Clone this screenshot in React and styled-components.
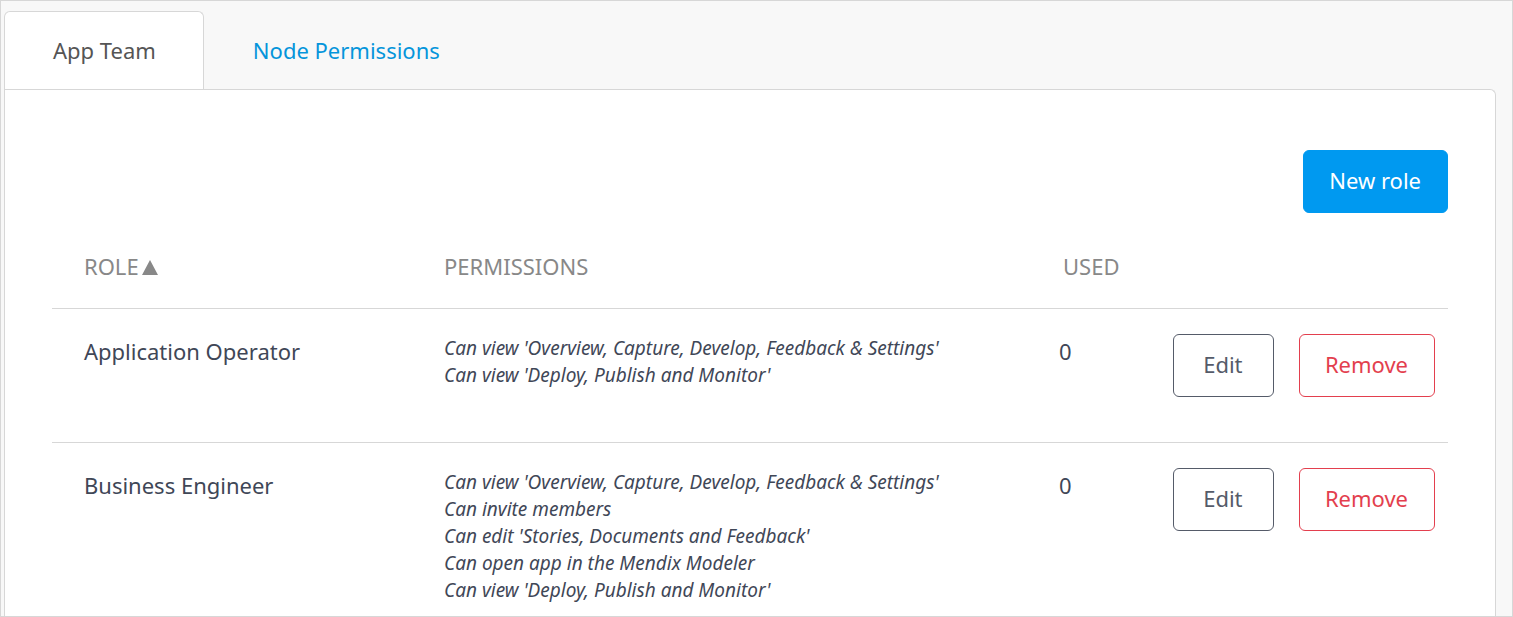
import React from 'react';
import styled, { createGlobalStyle } from 'styled-components';

const Global = createGlobalStyle`
  *, *::before, *::after { box-sizing: border-box; }
  body {
    margin: 0;
    background: #f8f8f8;
    color: #3f4757;
    font-family: "Noto Sans", sans-serif;
    font-size: 22px;
    line-height: 32px;
  }
`;

const Page = styled.div`
  height: 100vh;
  overflow: hidden;
  display: flex;
  flex-direction: column;
  border: 1px solid #d7d7d7;
  padding: 10px 16px 0 3px;
`;

const TabList = styled.nav`
  display: flex;
`;

const Tab = styled.a`
  padding: 22px 47px 23px 48px;
  border: 1px solid ${(p) => (p.$active ? '#d7d7d7' : 'transparent')};
  border-bottom: 0;
  border-radius: 6px 6px 0 0;
  background: ${(p) => (p.$active ? '#fff' : 'transparent')};
  color: ${(p) => (p.$active ? '#555' : '#0595db')};
  text-decoration: none;
`;

const Panel = styled.main`
  flex: 1 0 auto;
  background: #fff;
  border: 1px solid #d7d7d7;
  border-bottom: 0;
  border-radius: 0 6px 0 0;
  padding: 60px 47px 0;
`;

const Toolbar = styled.div`
  display: flex;
  justify-content: flex-end;
`;

const tones = {
  primary: { text: '#fff', line: '#0099f0', fill: '#0099f0' },
  neutral: { text: '#555b69', line: '#555b69', fill: '#fff' },
  danger: { text: '#e33f4e', line: '#e33f4e', fill: '#fff' },
};

const Button = styled.button`
  height: 63px;
  min-width: 101px;
  padding: 0 26px 3px 25px;
  border: 1px solid ${(p) => tones[p.$tone].line};
  border-radius: 6px;
  background: ${(p) => tones[p.$tone].fill};
  color: ${(p) => tones[p.$tone].text};
  font: inherit;
  white-space: nowrap;
  cursor: pointer;
`;

const Table = styled.table`
  width: 100%;
  margin-top: 13px;
  border-collapse: separate;
  border-spacing: 0;
  table-layout: fixed;
`;

const Column = styled.col`
  width: ${(p) => p.$width};
`;

const HeadCell = styled.th`
  padding: 24px 0 26px ${(p) => p.$indent || '0'};
  color: #888;
  font-weight: 400;
  text-align: left;
  text-transform: uppercase;
`;

const Cell = styled.td`
  height: 134px;
  padding: 25px 0 10px ${(p) => p.$indent || '0'};
  border-top: 1px solid #d7d7d7;
  vertical-align: top;
`;

const Label = styled.div`
  padding-top: 1px;
`;

const PermissionList = styled.ul`
  margin: 0;
  padding: 1px 0 0;
  list-style: none;
  font-size: 19px;
  font-style: italic;
  line-height: 27px;
`;

const Actions = styled.div`
  display: flex;
  justify-content: flex-end;
  gap: 25px;
  padding-right: 13px;
`;

const roles = [
  {
    name: 'Application Operator',
    used: 0,
    permissions: [
      "Can view 'Overview, Capture, Develop, Feedback & Settings'",
      "Can view 'Deploy, Publish and Monitor'",
    ],
  },
  {
    name: 'Business Engineer',
    used: 0,
    permissions: [
      "Can view 'Overview, Capture, Develop, Feedback & Settings'",
      'Can invite members',
      "Can edit 'Stories, Documents and Feedback'",
      'Can open app in the Mendix Modeler',
      "Can view 'Deploy, Publish and Monitor'",
    ],
  },
];

const SortArrow = styled.svg`
  width: 16px;
  height: 15px;
  margin-left: 3px;
`;

export default function App() {
  return (
    <>
      <Global />
      <Page>
        <TabList>
          <Tab href="#team" $active aria-current="page">App Team</Tab>
          <Tab href="#nodes">Node Permissions</Tab>
        </TabList>
        <Panel>
          <Toolbar>
            <Button type="button" $tone="primary">New role</Button>
          </Toolbar>
          <Table>
            <colgroup>
              <Column $width="392px" />
              <Column />
              <Column $width="69px" />
              <Column $width="320px" />
            </colgroup>
            <thead>
              <tr>
                <HeadCell scope="col" $indent="32px" aria-sort="ascending">
                  Role
                  <SortArrow viewBox="0 0 16 15" aria-hidden="true">
                    <path d="M8 0 16 15H0Z" fill="#888" />
                  </SortArrow>
                </HeadCell>
                <HeadCell scope="col">Permissions</HeadCell>
                <HeadCell scope="col" $indent="4px">Used</HeadCell>
                <HeadCell as="td" />
              </tr>
            </thead>
            <tbody>
              {roles.map((role) => (
                <tr key={role.name}>
                  <Cell $indent="32px"><Label>{role.name}</Label></Cell>
                  <Cell>
                    <PermissionList>
                      {role.permissions.map((text) => <li key={text}>{text}</li>)}
                    </PermissionList>
                  </Cell>
                  <Cell><Label>{role.used}</Label></Cell>
                  <Cell>
                    <Actions>
                      <Button type="button" $tone="neutral">Edit</Button>
                      <Button type="button" $tone="danger">Remove</Button>
                    </Actions>
                  </Cell>
                </tr>
              ))}
            </tbody>
          </Table>
        </Panel>
      </Page>
    </>
  );
}
